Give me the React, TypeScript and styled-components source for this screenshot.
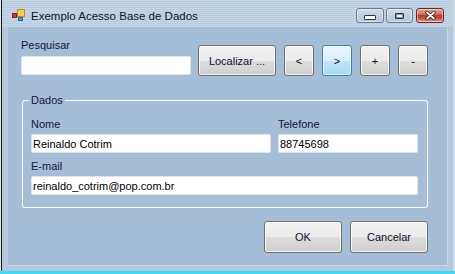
import React from 'react';
import styled, { createGlobalStyle } from 'styled-components';

const GlobalStyle = createGlobalStyle`
  html, body {
    margin: 0;
    padding: 0;
    background: #3ddcf2;
  }
  body {
    width: 455px;
    height: 274px;
    overflow: hidden;
    font-family: "Liberation Sans", Arial, sans-serif;
  }
`;

const Screen = styled.div`
  width: 455px;
  height: 274px;
  background: #3ddcf2;
`;

const Window = styled.div`
  display: flex;
  flex-direction: column;
  box-sizing: border-box;
  width: 454px;
  height: 271px;
  margin-left: 1px;
  border-left: 1px solid #101010;
  border-right: 2px solid #c9d9e8;
  box-shadow: -1px 0 0 #e4ecf3;
  background: #b3c8dd;
`;

const TitleBar = styled.div`
  display: flex;
  align-items: flex-start;
  flex: 0 0 27px;
  padding-left: 9px;
  background: repeating-linear-gradient(180deg, #c4d6e7 0px, #c4d6e7 1px, #b8cce0 1px, #b8cce0 2px);
`;

const AppIcon = styled.svg`
  margin-top: 7px;
  flex: 0 0 16px;
`;

const Title = styled.div`
  margin: 10px 0 0 4px;
  font-size: 11.5px;
  line-height: 13px;
  color: #101030;
`;

const Captions = styled.div`
  display: flex;
  gap: 2px;
  margin: 8px 9px 0 auto;
`;

const CaptionButton = styled.div<{ $close?: boolean; $w: number }>`
  display: flex;
  align-items: center;
  justify-content: center;
  box-sizing: border-box;
  width: ${p => p.$w}px;
  height: 15px;
  border: 1px solid ${p => (p.$close ? '#6d2a22' : '#6a7b90')};
  border-radius: 3px;
  background: ${p =>
    p.$close
      ? 'linear-gradient(180deg, #e0a094 0%, #d2786a 40%, #c0392b 50%, #c84c3c 70%, #e4a08e 100%)'
      : 'linear-gradient(180deg, #cddbe9 0%, #bfd0e2 50%, #b3c7dc 100%)'};
  box-shadow: inset 0 0 0 1px rgba(255, 255, 255, 0.45);
`;

const MinGlyph = styled.div`
  width: 10px;
  height: 3px;
  margin-top: 4px;
  border: 1px solid #333;
  border-radius: 1px;
  background: #fff;
`;

const MaxGlyph = styled.div`
  width: 7px;
  height: 4px;
  border: 1px solid #333;
  border-radius: 1px;
  background: #fff;
  box-shadow: inset 0 0 0 1px #7f8c9a;
`;

const Client = styled.div`
  display: flex;
  flex-direction: column;
  flex: 1;
  margin: 0 6px 6px 6px;
  padding: 12px 19px 0 13px;
  background: #a5bed8;
  box-shadow: 1px 1px 0 #c6d7e7;
`;

const Label = styled.label`
  display: block;
  font-size: 11px;
  line-height: 13px;
  color: #141438;
  margin-bottom: 3px;
`;

const TextBox = styled.input`
  display: block;
  box-sizing: border-box;
  width: 100%;
  height: 19px;
  margin: 0;
  padding: 0 1px;
  border: 1px solid #dfe5ec;
  border-radius: 2px;
  background: #fff;
  font-family: "Liberation Sans", Arial, sans-serif;
  font-size: 11px;
  color: #000;
  outline: none;
`;

const SearchRow = styled.div`
  display: flex;
  align-items: flex-end;
  gap: 8px;
`;

const SearchField = styled.div`
  width: 170px;
  margin-right: -1px;
  padding-bottom: 1px;

  ${Label} {
    margin-bottom: 4px;
  }
`;

const Button = styled.button<{ $w: number; $hot?: boolean; $h?: number }>`
  box-sizing: border-box;
  width: ${p => p.$w}px;
  height: ${p => p.$h ?? 31}px;
  padding: 0;
  border: 1px solid ${p => (p.$hot ? '#3c7fb1' : '#707070')};
  border-radius: 3px;
  background: ${p =>
    p.$hot
      ? 'linear-gradient(180deg, #eaf6fd 0%, #d9f0fc 50%, #bee6fd 50%, #a7d9f5 100%)'
      : 'linear-gradient(180deg, #f2f2f2 0%, #ebebeb 50%, #dddddd 50%, #cfcfcf 100%)'};
  box-shadow: inset 0 0 0 1px rgba(255, 255, 255, 0.7);
  font-family: "Liberation Sans", Arial, sans-serif;
  font-size: 11px;
  color: #101030;
`;

const GroupBox = styled.fieldset`
  margin: 18px 0 0 1px;
  padding: 11px 9px 12px 8px;
  min-width: 0;
  border: 1px solid #fff;
  border-radius: 3px;
`;

const Legend = styled.legend`
  margin-left: -2px;
  padding: 0 2px;
  font-size: 11px;
  line-height: 13px;
  color: #141438;
`;

const FieldRow = styled.div`
  display: flex;
  gap: 7px;

  & + & {
    margin-top: 7px;
  }
`;

const Field = styled.div<{ $w?: number }>`
  ${p => (p.$w ? `flex: 0 0 ${p.$w}px;` : 'flex: 1;')}
`;

const Footer = styled.div`
  display: flex;
  justify-content: flex-end;
  gap: 8px;
  margin-top: 13px;
`;

const App = () => {
  return (
    <Screen>
      <GlobalStyle />
      <Window>
        <TitleBar>
          <AppIcon width="16" height="16" viewBox="0 0 16 16">
            <rect x="1.5" y="6.5" width="4" height="4" fill="#d23a2a" stroke="#8a1f16" />
            <rect x="6.5" y="2.5" width="7" height="7" fill="#f6d04a" stroke="#c08a20" />
            <rect x="7.5" y="10.5" width="4" height="3" fill="#5a8fd8" stroke="#2f5fa8" />
          </AppIcon>
          <Title>Exemplo Acesso Base de Dados</Title>
          <Captions>
            <CaptionButton $w={28}>
              <MinGlyph />
            </CaptionButton>
            <CaptionButton $w={27} style={{ marginRight: 1 }}>
              <MaxGlyph />
            </CaptionButton>
            <CaptionButton $w={28} $close>
              <svg width="11" height="9" viewBox="0 0 11 9">
                <path d="M2 1.5 L9 7.5 M9 1.5 L2 7.5" stroke="#3a1a14" strokeWidth="3.4" strokeLinecap="round" />
                <path d="M2 1.5 L9 7.5 M9 1.5 L2 7.5" stroke="#fff" strokeWidth="1.8" strokeLinecap="round" />
              </svg>
            </CaptionButton>
          </Captions>
        </TitleBar>

        <Client>
          <SearchRow>
            <SearchField>
              <Label>Pesquisar</Label>
              <TextBox type="text" />
            </SearchField>
            <Button $w={78}>Localizar ...</Button>
            <Button $w={30}>&lt;</Button>
            <Button $w={30} $hot>&gt;</Button>
            <Button $w={30}>+</Button>
            <Button $w={30}>-</Button>
          </SearchRow>

          <GroupBox>
            <Legend>Dados</Legend>
            <FieldRow>
              <Field>
                <Label>Nome</Label>
                <TextBox type="text" defaultValue="Reinaldo Cotrim" />
              </Field>
              <Field $w={140}>
                <Label>Telefone</Label>
                <TextBox type="text" defaultValue="88745698" />
              </Field>
            </FieldRow>
            <FieldRow>
              <Field>
                <Label>E-mail</Label>
                <TextBox type="text" defaultValue="reinaldo_cotrim@pop.com.br" />
              </Field>
            </FieldRow>
          </GroupBox>

          <Footer>
            <Button $w={78} $h={32}>OK</Button>
            <Button $w={78} $h={32}>Cancelar</Button>
          </Footer>
        </Client>
      </Window>
    </Screen>
  );
};

export default App;
